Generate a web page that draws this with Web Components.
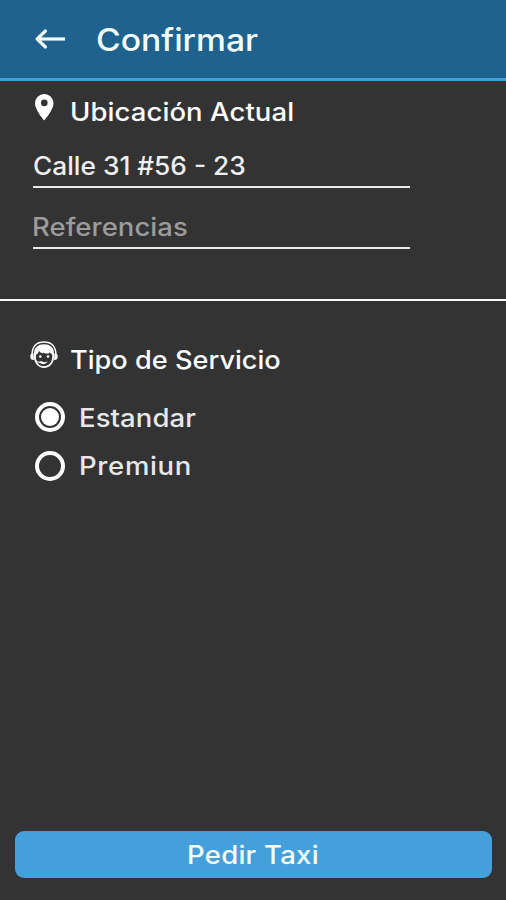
<!DOCTYPE html>
<html lang="es">
<head>
<meta charset="utf-8">
<title>Confirmar</title>
<style>
  html, body { margin: 0; height: 100%; background: #333; }
</style>
</head>
<body>
<taxi-confirm></taxi-confirm>
<script>
const FONT = 'Inter, "Open Sans", sans-serif';

/* Wide lettering: glyphs are widened a little, then tracked so the ink spans "span" px. */
class TrackedText extends HTMLElement {
  connectedCallback() {
    const root = this.attachShadow({ mode: 'open' });
    root.innerHTML = `<style>
      :host { display: block; white-space: nowrap; }
      span { display: inline-block; transform-origin: 0 0; }
    </style><span><slot></slot></span>`;
    const inner = root.querySelector('span');
    const text = this.textContent;
    const size = this.getAttribute('size') || '25';
    const target = Number(this.getAttribute('span'));
    this.style.font = `500 ${size}px/${size * 1.2}px ${FONT}`;
    const ctx = document.createElement('canvas').getContext('2d');
    ctx.font = `500 ${size}px ${FONT}`;
    const m = ctx.measureText(text);
    const left = -m.actualBoundingBoxLeft;
    const right = m.width - m.actualBoundingBoxRight;
    const ink = inner.getBoundingClientRect().width - left - right;
    const stretch = Math.min(1.1, target / ink);
    const gap = (target / stretch - ink) / (text.length - 1);
    inner.style.letterSpacing = gap.toFixed(3) + 'px';
    inner.style.transform = `scaleX(${stretch.toFixed(4)})`;
    inner.style.marginLeft = (-left * stretch).toFixed(2) + 'px';
  }
}
customElements.define('tracked-text', TrackedText);

const define = (name, html) => customElements.define(name, class extends HTMLElement {
  constructor() {
    super();
    this.attachShadow({ mode: 'open' }).innerHTML = html;
  }
});

define('app-header', `<style>
  :host { display: flex; box-sizing: border-box; height: 81px; padding: 21px 0 0 35px;
    background: #1e628d; border-bottom: 3px solid #449ed8; color: #f4feff; }
  svg { display: block; width: 31px; height: 22px; margin: 7px 31.5px 0 0; }
</style>
<svg viewBox="0 0 31 22" fill="none" stroke="currentColor" stroke-width="3.2">
  <path d="M2.6 11H30"/><path d="M10.4 3L2.2 11L10.4 19" stroke-linecap="round" stroke-linejoin="round"/>
</svg>
<slot></slot>`);

define('section-title', `<style>
  :host { display: flex; color: #fff; height: 30px; }
  .icon { width: 41px; height: 30px; flex: none; }
</style>
<div class="icon"><slot name="icon"></slot></div><slot></slot>`);

define('pin-icon', `<style>:host, svg { display: block; } svg { margin: -2px 0 0 4.7px; }</style>
<svg width="19" height="27" viewBox="0 0 19 27"><path fill="#fff" fill-rule="evenodd" d="M9.2 0A9.2 9.2 0 0 0 0 9.2C0 16 9.2 26.4 9.2 26.4S18.5 16 18.5 9.2A9.2 9.2 0 0 0 9.2 0ZM9.3 5.6A3.3 3.3 0 1 1 9.3 12.2A3.3 3.3 0 0 1 9.3 5.6Z"/></svg>`);

define('agent-icon', `<style>:host, svg { display: block; } svg { margin: -3px 0 0 0; }</style>
<svg width="28" height="28" viewBox="0 0 28 28">
  <path d="M2 13C2.6 4.6 7.2 1 14 1S25.4 4.6 26 13" fill="none" stroke="#fff" stroke-width="1.4"/>
  <path d="M3.6 12.2C.9 12.4.3 13.8.3 15.8S1 19 3.9 18.9ZM24.4 12.2C27.1 12.4 27.7 13.8 27.7 15.8S27 19 24.1 18.9Z" fill="#fff"/>
  <path d="M4 12.5C4.1 6.6 7.8 3.2 14 3.2S23.9 6.6 24 12.5V17C23.5 23 18.8 27 14 27S4.5 23 4 17Z" fill="#fff"/>
  <path d="M6 14C7.4 13.2 8.4 11.8 9 10C10.4 11.6 11.8 12.2 13.2 12.4L12.6 11.2C14.6 12.6 17 12.9 19.4 12.3L18.9 11.2C20.7 11.9 21.7 13 22.2 14.2V17C21.6 22 18.2 25.2 14 25.2C11.4 25.2 9.2 24.1 7.7 22L6.4 19.6C6 18 5.9 16.4 6 14Z" fill="#333"/>
  <circle cx="10.3" cy="15.5" r="1.3" fill="#fff"/><circle cx="18" cy="15.5" r="1.3" fill="#fff"/>
  <path d="M5.2 18.6Q7 21.3 10.5 21.7" fill="none" stroke="#fff" stroke-width="1"/>
  <path d="M9.3 20.6C11 20 12.4 20.6 14 21.3C15.6 21.5 16.8 20.8 17.6 20C17 22.4 14.8 23.4 12.5 23.1C10.8 22.9 9.6 22.1 9.3 20.6Z" fill="#fff"/>
</svg>`);

define('line-field', `<style>
  :host { display: block; box-sizing: border-box; width: 377px; height: 37px;
    border-bottom: 2px solid #e9e9e9; color: #efefef; }
  :host([placeholder]) { color: #9b9b9b; }
</style><slot></slot>`);

define('radio-option', `<style>
  :host { display: flex; align-items: center; height: 30px; color: #e8e8e8; }
  .ring { display: flex; box-sizing: border-box; width: 30px; height: 30px; margin-right: 16px;
    border: 4px solid #fff; border-radius: 50%; align-items: center; justify-content: center; }
  :host([checked]) .ring::after { content: ""; width: 18.5px; height: 18.5px; border-radius: 50%; background: #fff; }
</style><div class="ring"></div><slot></slot>`);

define('action-button', `<style>
  :host { display: flex; box-sizing: border-box; height: 47px; margin: auto 14px 22px 15px;
    padding: 9px 0 0 174.5px; border-radius: 9px; background: #449fdb; color: #f4ffff; }
</style><slot></slot>`);

define('taxi-confirm', `<style>
  :host { display: flex; flex-direction: column; height: 900px; background: #333; }
  .place { display: flex; flex-direction: column; box-sizing: border-box; height: 220px;
    padding: 15px 0 0 33px; border-bottom: 2px solid #f7f7f7; }
  .place section-title { margin: 0 0 25px -3px; }
  .place section-title tracked-text { margin: 0.6px 0 0 1.4px; }
  .place line-field tracked-text { margin-left: 0.6px; }
  .place line-field[placeholder] tracked-text { margin-left: 1.5px; }
  .place line-field + line-field { margin-top: 24px; }
  .service { padding: 43px 0 0 30px; }
  .service section-title tracked-text { padding-top: 0.6px; }
  .options { display: grid; gap: 18.5px; padding: 28px 0 0 5px; }
  .options tracked-text { padding-top: 1px; }
</style>
<app-header><tracked-text size="31" span="161">Confirmar</tracked-text></app-header>
<div class="place">
  <section-title><pin-icon slot="icon"></pin-icon><tracked-text span="220.5">Ubicación Actual</tracked-text></section-title>
  <line-field><tracked-text span="211">Calle 31 #56 - 23</tracked-text></line-field>
  <line-field placeholder><tracked-text span="153">Referencias</tracked-text></line-field>
</div>
<div class="service">
  <section-title><agent-icon slot="icon"></agent-icon><tracked-text span="208.5">Tipo de Servicio</tracked-text></section-title>
  <div class="options">
    <radio-option checked><tracked-text span="115">Estandar</tracked-text></radio-option>
    <radio-option><tracked-text span="109">Premiun</tracked-text></radio-option>
  </div>
</div>
<action-button><tracked-text span="128">Pedir Taxi</tracked-text></action-button>`);
</script>
</body>
</html>
